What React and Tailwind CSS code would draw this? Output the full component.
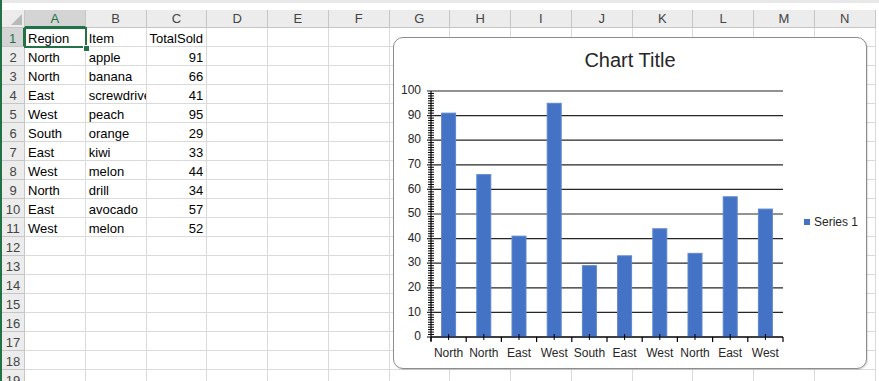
import React from 'react';

const cols = ['A', 'B', 'C', 'D', 'E', 'F', 'G', 'H', 'I', 'J', 'K', 'L', 'M', 'N'];

const data = [
  ['Region', 'Item', 'TotalSold'],
  ['North', 'apple', 91],
  ['North', 'banana', 66],
  ['East', 'screwdriver', 41],
  ['West', 'peach', 95],
  ['South', 'orange', 29],
  ['East', 'kiwi', 33],
  ['West', 'melon', 44],
  ['North', 'drill', 34],
  ['East', 'avocado', 57],
  ['West', 'melon', 52],
];

const rowCount = 19;

function Chart() {
  const left = 37, right = 389, top = 53, bottom = 299;
  const scale = (bottom - top) / 100;
  const catW = (right - left) / 10;
  const values = data.slice(1);
  const minor = [];
  for (let v = 0; v <= 100; v++) if (v % 10 !== 0) minor.push(v);

  return (
    <div className="absolute left-[393px] top-[37px] w-[474px] h-[332px] rounded-[10px] border border-[#8c8c8c] bg-white shadow-[1px_1px_1px_rgba(0,0,0,0.12)]">
      <svg width="472" height="330" className="font-['Liberation_Sans',sans-serif]">
        <text x="236" y="24" textAnchor="middle" dominantBaseline="middle" fontSize="20" fill="#262626">Chart Title</text>
        {[0, 10, 20, 30, 40, 50, 60, 70, 80, 90, 100].map((v) => {
          const y = bottom - v * scale;
          return (
            <g key={v}>
              <line x1={left - 4} x2={right} y1={y} y2={y} stroke={v === 0 ? '#000' : '#262626'} strokeWidth="1.2" />
              <text x="27" y={y} textAnchor="end" dominantBaseline="middle" fontSize="12" fill="#262626">{v}</text>
            </g>
          );
        })}
        {minor.map((v) => (
          <line key={v} x1={left - 3} x2={left + 3} y1={bottom - v * scale} y2={bottom - v * scale} stroke="#000" strokeWidth="1" />
        ))}
        <line x1={left} x2={left} y1={top} y2={bottom + 4} stroke="#000" strokeWidth="1.2" />
        {values.map((r, i) => {
          const cx = left + catW * (i + 0.5);
          const h = r[2] * scale;
          return (
            <g key={i}>
              <rect x={cx - 7} y={bottom - h} width="14" height={h} fill="#4472c4" stroke="#5f86cf" strokeWidth="1" />
              <line x1={cx} x2={cx} y1={bottom - 3} y2={bottom + 3} stroke="#000" strokeWidth="1" />
              <text x={cx} y="316" textAnchor="middle" dominantBaseline="middle" fontSize="12" fill="#262626">{r[0]}</text>
            </g>
          );
        })}
        {Array.from({ length: 11 }, (_, i) => (
          <line key={i} x1={left + catW * i} x2={left + catW * i} y1={bottom} y2={bottom + 5} stroke="#000" strokeWidth="1.2" />
        ))}
        <line x1={left} x2={right} y1={bottom} y2={bottom} stroke="#000" strokeWidth="1.2" />
        <rect x="410" y="181" width="6" height="6" fill="#4472c4" />
        <text x="420" y="185" dominantBaseline="middle" fontSize="12" fill="#262626">Series 1</text>
      </svg>
    </div>
  );
}

export default function App() {
  return (
    <div className="relative w-[879px] h-[381px] overflow-hidden bg-white font-['Liberation_Sans',sans-serif] text-[13px] text-black">
      <div className="flex h-full">
        <div className="w-[2px] h-full shrink-0 bg-[#217346]" />
        <div className="flex-1 flex flex-col">
          <div className="h-[10px] shrink-0 bg-white border-t-[3px] border-[#e8e8e8]" />
          <div className="grid shrink-0 grid-cols-[23px_repeat(14,60.75px)]">
            <div className="relative h-[18px] bg-[#ececec] border-r border-b border-[#c6c6c6]">
              <svg width="11" height="11" className="absolute right-[2px] bottom-[2px]">
                <polygon points="11,0 11,11 0,11" fill="#b9b9b9" />
              </svg>
            </div>
            {cols.map((c, i) => (
              <div
                key={c}
                className={
                  i === 0
                    ? 'flex h-[18px] items-end justify-center bg-[#d4d4d4] border-r border-[#c6c6c6] border-b-2 border-b-[#217346] text-[#217346] leading-[15px]'
                    : 'flex h-[18px] items-end justify-center bg-[#ececec] border-r border-b border-[#c6c6c6] text-[#444] leading-[16px]'
                }
              >
                {c}
              </div>
            ))}
            {Array.from({ length: rowCount }, (_, r) => (
              <React.Fragment key={r}>
                <div
                  className={
                    r === 0
                      ? 'flex h-[19px] items-end justify-center bg-[#d4d4d4] border-b border-[#c6c6c6] border-r-2 border-r-[#217346] text-[#217346] leading-[15px]'
                      : 'flex h-[19px] items-end justify-center bg-[#ececec] border-r border-b border-[#c6c6c6] text-[#444] leading-[15px]'
                  }
                >
                  {r + 1}
                </div>
                {cols.map((c, ci) => {
                  const v = data[r] ? data[r][ci] : undefined;
                  const isNum = typeof v === 'number';
                  return (
                    <div
                      key={c}
                      className={
                        'flex h-[19px] items-end overflow-hidden whitespace-nowrap border-r border-b border-[#dadada] px-[3px] leading-[15px] ' +
                        (isNum ? 'justify-end' : 'justify-start')
                      }
                    >
                      {v}
                    </div>
                  );
                })}
              </React.Fragment>
            ))}
          </div>
        </div>
      </div>
      <div className="absolute left-[24px] top-[27px] w-[63px] h-[21px] border-2 border-[#217346]" />
      <div className="absolute left-[83px] top-[45px] w-[7px] h-[7px] bg-[#217346] border border-white" />
      <Chart />
    </div>
  );
}
